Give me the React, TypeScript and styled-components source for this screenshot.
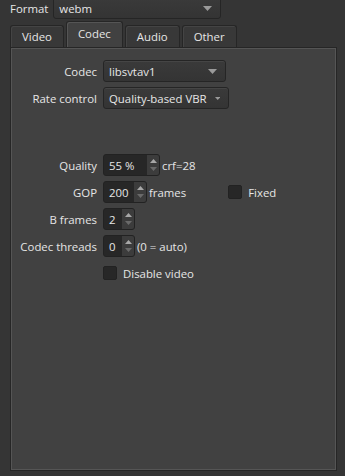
import * as React from 'react'
import styled, { createGlobalStyle } from 'styled-components'

const GlobalStyle = createGlobalStyle`
  html, body {
    margin: 0;
    padding: 0;
    background: #353535;
  }
  body {
    font-family: 'Open Sans', 'Noto Sans', sans-serif;
    font-size: 11.4px;
    color: #e6e6e6;
  }
`

const Arrow = () => (
  <svg width="9" height="5" viewBox="0 0 9 5">
    <path d="M0 0 H9 L4.5 5 Z" fill="#9a9a9a" />
  </svg>
)

const SpinArrows = () => (
  <svg width="7" height="16" viewBox="0 0 7 16">
    <path d="M0 6 L3.5 2 L7 6 Z" fill="#a8a8a8" />
    <path d="M0 10 L3.5 14 L7 10 Z" fill="#6a6a6a" />
  </svg>
)

interface ComboProps {
  value: string
  width: number
}

const Combo = ({ value, width }: ComboProps) => (
  <ComboBox style={{ width }}>
    <span>{value}</span>
    <Arrow />
  </ComboBox>
)

interface SpinProps {
  value: string
  width: number
}

const Spin = ({ value, width }: SpinProps) => (
  <SpinBox style={{ width }}>
    <SpinValue>{value}</SpinValue>
    <SpinButtons>
      <SpinArrows />
    </SpinButtons>
  </SpinBox>
)

const App = () => (
  <Page>
    <GlobalStyle />
    <FormatRow>
      <Label>Format</Label>
      <Combo value="webm" width={168} />
    </FormatRow>
    <TabBar>
      <Tab>Video</Tab>
      <Tab active>Codec</Tab>
      <Tab>Audio</Tab>
      <Tab>Other</Tab>
    </TabBar>
    <Panel>
      <Form>
        <Label>Codec</Label>
        <Combo value="libsvtav1" width={123} />
        <Label>Rate control</Label>
        <Combo value="Quality-based VBR" width={126} />
      </Form>
      <Form spaced>
        <Label>Quality</Label>
        <Field>
          <Spin value="55 %" width={57} />
          <Suffix>crf=28</Suffix>
        </Field>
        <Label>GOP</Label>
        <Field>
          <Spin value="200" width={44} />
          <Suffix>frames</Suffix>
          <FixedWrap>
            <Check />
            <span>Fixed</span>
          </FixedWrap>
        </Field>
        <Label>B frames</Label>
        <Field>
          <Spin value="2" width={32} />
        </Field>
        <Label>Codec threads</Label>
        <Field>
          <Spin value="0" width={32} />
          <Suffix>(0 = auto)</Suffix>
        </Field>
        <span />
        <Field>
          <Check />
          <CheckText>Disable video</CheckText>
        </Field>
      </Form>
    </Panel>
  </Page>
)

export default App

const Page = styled.div`
  width: 345px;
  height: 476px;
  overflow: hidden;
  background: #353535;
  display: flex;
  flex-direction: column;
`

const FormatRow = styled.div`
  display: flex;
  align-items: center;
  gap: 5px;
  height: 22px;
  padding-left: 10px;
  margin-top: -3px;
  margin-bottom: 2px;
`

const Label = styled.span`
  white-space: nowrap;
  text-align: right;
`

const ComboBox = styled.div`
  box-sizing: border-box;
  height: 22px;
  display: flex;
  align-items: center;
  justify-content: space-between;
  gap: 8px;
  padding: 0 8px 0 5px;
  white-space: nowrap;
  background: linear-gradient(#3a3a3a, #343434);
  border: 1px solid #252525;
  border-radius: 3px;
  box-shadow: inset 0 1px 0 #454545;
`

const TabBar = styled.div`
  display: flex;
  align-items: flex-end;
  gap: 2px;
  padding-left: 10px;
  height: 26px;
`

const Tab = styled.div<{ active?: boolean }>`
  box-sizing: border-box;
  height: ${p => (p.active ? 26 : 22)}px;
  padding: 0 11px;
  display: flex;
  align-items: center;
  border: 1px solid #262626;
  border-bottom: none;
  border-radius: 3px 3px 0 0;
  background: ${p => (p.active ? '#414141' : '#383838')};
  box-shadow: inset 1px 1px 0 ${p => (p.active ? '#555' : '#444')};
  padding-bottom: ${p => (p.active ? 2 : 0)}px;
`

const Panel = styled.div`
  box-sizing: border-box;
  width: 327px;
  height: 424px;
  margin-left: 10px;
  background: #414141;
  border: 1px solid #262626;
  box-shadow: inset 1px 1px 0 #555, inset -1px -1px 0 #555;
  padding-top: 12px;
`

const Form = styled.div<{ spaced?: boolean }>`
  display: grid;
  grid-template-columns: 86px auto;
  column-gap: 6px;
  row-gap: 5px;
  align-items: center;
  justify-items: start;
  margin-top: ${p => (p.spaced ? 45 : 0)}px;
  & > ${Label} {
    justify-self: end;
  }
`

const Field = styled.div`
  display: flex;
  align-items: center;
  height: 22px;
`

const SpinBox = styled.div`
  box-sizing: border-box;
  height: 22px;
  display: flex;
  align-items: center;
  background: #272727;
  border: 1px solid #222;
  border-radius: 3px;
`

const SpinValue = styled.span`
  flex: 1;
  padding-left: 5px;
`

const SpinButtons = styled.div`
  box-sizing: border-box;
  width: 12px;
  height: 20px;
  display: flex;
  align-items: center;
  justify-content: center;
  background: #3c3c3c;
  border-radius: 0 2px 2px 0;
`

const Suffix = styled.span`
  margin-left: 2px;
`

const FixedWrap = styled.div`
  display: flex;
  align-items: center;
  gap: 6px;
  margin-left: 42px;
`

const Check = styled.div`
  box-sizing: border-box;
  width: 14px;
  height: 14px;
  background: #272727;
  border: 1px solid #222;
  border-radius: 2px;
`

const CheckText = styled.span`
  margin-left: 6px;
`
